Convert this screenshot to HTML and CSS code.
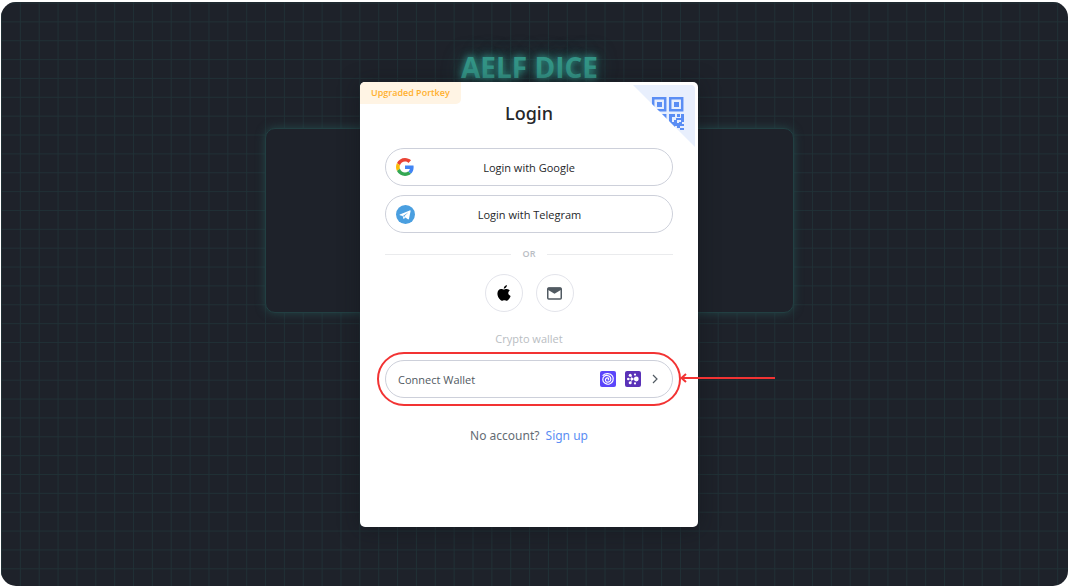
FILE: index.html
```
<!DOCTYPE html>
<html lang="en">
<head>
<meta charset="utf-8">
<title>aelf Dice - Login</title>
<meta name="viewport" content="width=device-width, initial-scale=1">
<link rel="stylesheet" href="styles.css">
</head>
<body>
<main class="stage">
  <svg class="grid" aria-hidden="true">
    <defs>
      <pattern id="cells" width="20" height="20" patternUnits="userSpaceOnUse" patternTransform="translate(0 .5) scale(.943)">
        <path d="M0 .5H20M.5 0V20" stroke="#203036" stroke-width="1"/>
      </pattern>
    </defs>
    <rect width="100%" height="100%" fill="url(#cells)"/>
  </svg>
  <div class="game">
    <h1 class="game-title">AELF DICE</h1>
    <div class="game-panel"></div>
  </div>
  <div class="overlay">
    <section class="card" role="dialog" aria-labelledby="login-title">
      <span class="tag">Upgraded Portkey</span>
      <button class="qr" type="button" aria-label="Scan code">
        <svg viewBox="0 0 62 62" width="62" height="62" aria-hidden="true">
          <defs><clipPath id="corner"><path d="M0 0H58Q62 0 62 4V62Z"/></clipPath></defs>
          <g clip-path="url(#corner)">
            <rect width="62" height="62" fill="#e8effd"/>
            <path fill="none" stroke="#5b8ef4" stroke-width="2.500" d="M20.200 13.200h12v12h-12zM37.200 13.200h12v12h-12zM20.200 30.200h12v12h-12z"/>
            <path fill="#5b8ef4" d="M24 17h5v5h-5zM41 17h5v5h-5zM24 34h5v5h-5zM36 29h6v3h-3v5h3v3h-6zM44 29h3v3h-3zM48 29h3v8h-3v-2h-4v3h-3v-3h2v-2h5zM42 38h4v3h-4zM46 37h3v2h2v2h-5zM44 40h3v3h4v2h-4v-2h-3zM39 40h3v2h-3z"/>
          </g>
        </svg>
      </button>
      <h2 class="card-title" id="login-title">Login</h2>
      <div class="providers">
        <button class="pill" type="button">
          <svg class="pill-icon" viewBox="0 0 48 48" width="18" height="18" aria-hidden="true">
            <path fill="#ea4335" d="M24 9.5c3.54 0 6.71 1.22 9.21 3.6l6.85-6.85C35.9 2.38 30.47 0 24 0 14.62 0 6.51 5.38 2.56 13.22l7.98 6.19C12.43 13.72 17.74 9.5 24 9.5z"/>
            <path fill="#4285f4" d="M46.98 24.55c0-1.57-.15-3.09-.38-4.55H24v9.02h12.94c-.58 2.96-2.26 5.48-4.78 7.18l7.73 6c4.51-4.18 7.09-10.36 7.09-17.65z"/>
            <path fill="#fbbc05" d="M10.53 28.59c-.48-1.45-.76-2.99-.76-4.59s.27-3.14.76-4.59l-7.98-6.19C.92 16.46 0 20.12 0 24c0 3.88.92 7.54 2.56 10.78l7.97-6.19z"/>
            <path fill="#34a853" d="M24 48c6.48 0 11.93-2.13 15.89-5.81l-7.73-6c-2.15 1.45-4.92 2.3-8.16 2.3-6.26 0-11.57-4.22-13.47-9.91l-7.98 6.19C6.51 42.62 14.62 48 24 48z"/>
          </svg>
          <span class="pill-label">Login with Google</span>
        </button>
        <button class="pill" type="button">
          <svg class="pill-icon" viewBox="0 0 24 24" width="19" height="19" aria-hidden="true">
            <circle cx="12" cy="12" r="12" fill="#4a9fe0"/>
            <path fill="#fff" d="M4.8 11.9 17.3 6.8c.8-.3 1.3.1 1.1 1l-2 9.7c-.2.8-.7 1-1.4.6l-3.2-2.4-1.6 1.6c-.4.4-.8.3-.9-.3l-.9-3.1-3.5-1.1c-.7-.2-.7-.6-.1-.9z"/>
            <path fill="#4a9fe0" d="m9.200 13.500 6.600-4.500-5.100 5-.4 2.200z"/>
          </svg>
          <span class="pill-label">Login with Telegram</span>
        </button>
      </div>
      <div class="divider"><span>OR</span></div>
      <div class="rounds">
        <button class="round" type="button" aria-label="Login with Apple">
          <svg viewBox="0 0 14 16" width="14" height="16" aria-hidden="true">
            <path d="M9.900 0c.1 1-.3 1.900-.9 2.600-.6.7-1.400 1.100-2.200 1.100-.1-.9.3-1.800.9-2.500C8.300.6 9.200.1 9.900 0zM7 4.500c.5 0 1.500-.7 2.800-.6 1.300.1 2.400.6 3 1.600-2.300 1.600-2 4.400.8 5.400-.5 1.500-1.500 3.200-2.400 4.200-.9 1-1.700.8-2.500.4-1-.4-1.700-.4-2.700 0-.9.4-1.700.5-2.500-.4C1.400 12.800.4 10.900.4 8.700c0-3 1.700-4.700 3.700-4.800 1.200 0 2.100.6 2.900.6z"/>
          </svg>
        </button>
        <button class="round" type="button" aria-label="Login with email">
          <svg viewBox="0 0 15 13" width="15" height="13" aria-hidden="true">
            <rect x=".75" y="1" width="13.500" height="11" rx="1" fill="none" stroke="#515a62" stroke-width="1.500"/>
            <path d="M.8 1.500Q.8.500 2 .5h11q1.200 0 1.200 1v1.200L7.500 6.800.8 2.700z" fill="#515a62"/>
          </svg>
        </button>
      </div>
      <h3 class="caption">Crypto wallet</h3>
      <div class="wallet">
        <button class="pill pill-wallet" type="button">
          <span class="wallet-label">Connect Wallet</span>
          <svg viewBox="0 0 16 16" width="16" height="16" aria-hidden="true">
            <rect width="16" height="16" rx="2" fill="#5b45fa"/>
            <path d="M3 4.300C5.200 2 10.500 2 12.500 5c1.800 2.900.4 7-3 8-3.200.9-6.600-1.200-6.700-4.300C2.700 5.800 5.300 4 7.800 4.600c2.500.5 3.800 3.200 2.600 5.200-1 1.700-3.800 1.900-4.700.2-.8-1.500.3-3.200 1.800-3.100 1.300.1 1.700 1.500.7 2" fill="none" stroke="#fff" stroke-width="1.200" stroke-linecap="round"/>
          </svg>
          <svg viewBox="0 0 16 16" width="16" height="16" aria-hidden="true">
            <rect width="16" height="16" rx="2" fill="#5a32b8"/>
            <path d="M3.500 8H11M7.500 8 5.500 4.500M7.500 8l-2 3.500" stroke="#fff" stroke-width=".7"/>
            <g fill="#fff"><circle cx="11.300" cy="8" r="2.400"/><circle cx="7" cy="8" r="1.300"/><circle cx="3.200" cy="8" r="1.200"/><circle cx="5.200" cy="4.300" r="1.500"/><circle cx="5.200" cy="11.700" r="1.500"/><circle cx="10" cy="3.600" r="1.100"/><circle cx="10" cy="12.400" r="1.100"/></g>
          </svg>
          <svg viewBox="0 0 10 10" width="10" height="10" aria-hidden="true"><path d="m3 1 4 4-4 4" fill="none" stroke="#515a62" stroke-width="1.200"/></svg>
        </button>
        <span class="ring"></span>
        <svg class="arrow" viewBox="0 0 95 10" width="95" height="10" aria-hidden="true"><path d="M1 5H95M6 1 1.500 5 6 9" fill="none" stroke="#f23333" stroke-width="2"/></svg>
      </div>
      <p class="signup">No account? <a href="#">Sign up</a></p>
    </section>
  </div>
</main>
</body>
</html>
```
FILE: styles.css
```
* {
  box-sizing: border-box;
}

body {
  margin: 0;
  padding: 2px 1px 1px;
  min-height: 100vh;
  display: flex;
  background: #fff;
  font-family: "Open Sans", "Noto Sans", sans-serif;
  font-size: 11px;
  color: #25272a;
}

h1, h2, h3, p {
  margin: 0;
}

button {
  font: inherit;
  color: inherit;
  cursor: pointer;
}

svg {
  display: block;
}

.stage {
  position: relative;
  flex: 1;
  border-radius: 15px;
  background: #1e222a;
  overflow: hidden;
}

.grid {
  position: absolute;
  inset: 0;
  width: 100%;
  height: 100%;
}

.game {
  position: relative;
  display: flex;
  flex-direction: column;
  align-items: center;
  gap: 42px;
  padding: 46px 10px 0 0;
}

.game-title {
  font-size: 28px;
  line-height: 38px;
  font-weight: 700;
  color: #339486;
  text-shadow: 0 0 6px #2c847a, 0 0 10px #2a6e69, 0 0 20px #285e5c;
}

.game-panel {
  width: 50%;
  max-width: 529px;
  min-width: 340px;
  height: 185px;
  border: 1px solid #223f42;
  border-radius: 10px;
  background: #1e222a;
  box-shadow: 0 0 10px #244748;
}

.overlay {
  position: absolute;
  inset: 0;
  display: flex;
  justify-content: center;
  align-items: flex-start;
  padding: 80px 11px 0 0;
}

.card {
  position: relative;
  width: 338px;
  padding: 18px 25px 82px;
  border-radius: 5px;
  background: #fff;
  box-shadow: 0 2px 20px rgba(16, 20, 26, 0.5);
}

.tag {
  position: absolute;
  top: 0;
  left: 0;
  padding: 0 11px;
  border-radius: 5px 0 5px 0;
  background: #fff4e4;
  color: #ffb02e;
  font-size: 9px;
  font-weight: 600;
  line-height: 22px;
}

.qr {
  position: absolute;
  top: 3px;
  right: 3px;
  padding: 0;
  border: 0;
  background: none;
}

.card-title {
  font-family: "Noto Sans", "Open Sans", sans-serif;
  font-size: 18px;
  line-height: 26px;
  font-weight: 500;
  text-align: center;
}

.providers {
  display: grid;
  gap: 9px;
  margin-top: 22px;
}

.pill {
  display: flex;
  align-items: center;
  width: 100%;
  height: 38px;
  padding: 0 10px;
  border: 1px solid #cdd0da;
  border-radius: 19px;
  background: #fff;
}

.pill-icon {
  flex: none;
}

.pill-label {
  flex: 1;
  padding-right: 18px;
}

.divider {
  display: flex;
  align-items: center;
  gap: 12px;
  margin-top: 13px;
  font-size: 9px;
  line-height: 16px;
  font-weight: 600;
  color: #b9bdc4;
}

.divider::before,
.divider::after {
  content: "";
  flex: 1;
  height: 1px;
  background: #eaebed;
}

.rounds {
  display: flex;
  justify-content: center;
  gap: 13px;
  margin-top: 12px;
}

.round {
  display: grid;
  place-items: center;
  width: 38px;
  height: 38px;
  padding: 0;
  border: 1px solid #e3e4eb;
  border-radius: 50%;
  background: #fff;
}

.caption {
  margin-top: 19px;
  font-size: 11px;
  line-height: 16px;
  font-weight: 400;
  text-align: center;
  color: #b9bdc2;
}

.wallet {
  position: relative;
  margin-top: 13px;
}

.pill-wallet {
  gap: 9px;
  padding: 0 12px;
  color: #515a62;
}

.wallet-label {
  flex: 1;
  text-align: left;
}

.ring {
  position: absolute;
  inset: -8px;
  border: 2px solid #f23333;
  border-radius: 27px;
  pointer-events: none;
}

.arrow {
  position: absolute;
  top: 13px;
  left: calc(100% + 7px);
}

.signup {
  margin-top: 29px;
  font-family: "Noto Sans", "Open Sans", sans-serif;
  font-size: 12px;
  line-height: 18px;
  text-align: center;
  color: #646b73;
}

.signup a {
  margin-left: 3px;
  color: #5b8ef4;
  text-decoration: none;
}
```
